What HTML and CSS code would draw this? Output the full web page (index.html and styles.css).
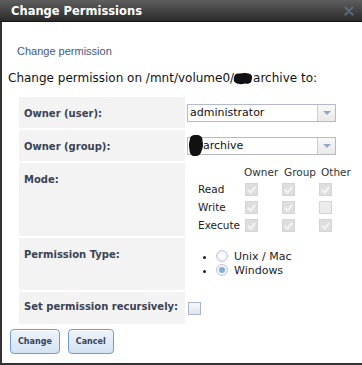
FILE: index.html
```html
<!DOCTYPE html>
<html lang="en">
<head>
    <meta charset="UTF-8">
    <title>Change Permissions</title>
    <link rel="stylesheet" href="styles.css">
</head>
<body>
    <div class="dialog">
        <div class="titlebar">
            <span class="title">Change Permissions</span>
            <svg class="close" width="10" height="10" viewBox="0 0 10 10">
                <path d="M1.5 1.5 L8.5 8.5 M8.5 1.5 L1.5 8.5" stroke="#5d6d84" stroke-width="2.4" stroke-linecap="round"/>
            </svg>
        </div>
        <div class="content">
            <p class="subtitle">Change permission</p>
            <p class="path">Change permission on /mnt/volume0/<svg class="blot" width="20" height="13" viewBox="0 0 20 13"><path d="M1 6 C1 2 4 1 7 1.5 C10 0.5 14 1 17 2 C19.5 3 19.5 6 18.5 8 C19 10.5 16 12.5 12 11.5 C9 12.5 5 12.5 3 11 C0.5 10 0.5 8 1 6 Z" fill="#111"/></svg>archive to:</p>

            <table class="form">
                <colgroup>
                    <col class="label-col">
                    <col>
                </colgroup>
                <tr>
                    <th>Owner (user):</th>
                    <td>
                        <div class="select"><span class="val">administrator</span><span class="arrow"></span></div>
                    </td>
                </tr>
                <tr>
                    <th>Owner (group):</th>
                    <td>
                        <div class="select"><span class="val"><svg class="blot tall" width="16" height="23" viewBox="0 0 16 23"><path d="M2 5 C2 2 5 0.5 8 1 C12 0.5 15 3 14.5 7 C15.5 10 15 14 13.5 17 C13 20.5 10 22.5 7 22 C4 22.5 1.5 20 1.5 16 C0.5 12 1 8 2 5 Z" fill="#111"/></svg>archive</span><span class="arrow"></span></div>
                    </td>
                </tr>
                <tr>
                    <th>Mode:</th>
                    <td class="mode">
                        <div class="mode-grid">
                            <span></span><span class="head">Owner</span><span class="head">Group</span><span class="head">Other</span>
                            <span class="perm">Read</span><span class="cb on"></span><span class="cb on"></span><span class="cb on"></span>
                            <span class="perm">Write</span><span class="cb on"></span><span class="cb on"></span><span class="cb"></span>
                            <span class="perm">Execute</span><span class="cb on"></span><span class="cb on"></span><span class="cb on"></span>
                        </div>
                    </td>
                </tr>
                <tr>
                    <th>Permission Type:</th>
                    <td>
                        <ul class="types">
                            <li><span class="radio"></span>Unix / Mac</li>
                            <li><span class="radio checked"></span>Windows</li>
                        </ul>
                    </td>
                </tr>
                <tr>
                    <th class="mid">Set permission recursively:</th>
                    <td>
                        <span class="check"></span>
                    </td>
                </tr>
            </table>

            <div class="buttons">
                <button type="button">Change</button>
                <button type="button">Cancel</button>
            </div>
        </div>
    </div>
</body>
</html>
```

FILE: styles.css
```css
body {
    margin: 0;
    background: #fff;
    font-family: "DejaVu Sans", Verdana, sans-serif;
}
.dialog {
    width: 362px;
    height: 365px;
    display: flex;
    flex-direction: column;
}
.titlebar {
    height: 22px;
    flex: none;
    display: flex;
    align-items: center;
    justify-content: space-between;
    padding: 0 8px 0 11px;
    background: linear-gradient(#5e5e5e, #2a2a2a);
    border-bottom: 1px solid #151515;
    box-sizing: border-box;
}
.title {
    color: #fff;
    font-weight: bold;
    font-size: 11.5px;
    line-height: 14px;
    margin-top: 1px;
}
.close {
    opacity: 0.9;
}
.content {
    flex: 1;
    border-left: 2px solid #333;
    border-bottom: 2px solid #333;
}
.subtitle {
    margin: 23px 0 0 15px;
    font-family: "Liberation Sans", Arial, sans-serif;
    font-size: 11px;
    line-height: 13px;
    color: #45587a;
}
.path {
    margin: 13px 0 0 6px;
    font-size: 12px;
    line-height: 14px;
    color: #111;
}
.blot {
    vertical-align: -3px;
    margin-left: -1px;
}
.form {
    margin: 10px 0 0 15px;
    border-spacing: 2px;
    width: 330px;
    table-layout: fixed;
}
.label-col {
    width: 166px;
}
.form th {
    background: #f3f3f3;
    text-align: left;
    vertical-align: top;
    padding: 9px 5px 0 5px;
    font-size: 10px;
    line-height: 16px;
    color: #3a4252;
    white-space: nowrap;
}
.form th.mid {
    padding-top: 7px;
}
.form td {
    padding: 7px 0 6px 0;
    vertical-align: top;
}
.select {
    width: 149px;
    height: 18px;
    box-sizing: border-box;
    border: 1px solid #b4bac8;
    display: flex;
    background: #fff;
}
.select .val {
    flex: 1;
    padding-left: 2px;
    font-size: 11px;
    line-height: 16px;
    color: #111;
    white-space: nowrap;
}
.blot.tall {
    vertical-align: middle;
    margin: -5px -1px -4px -2px;
}
.arrow {
    width: 17px;
    border-left: 1px solid #c9cdd6;
    background: linear-gradient(#f8f8f8, #e9e9e9);
    display: flex;
    align-items: center;
    justify-content: center;
}
.arrow::after {
    content: "";
    border-left: 4px solid transparent;
    border-right: 4px solid transparent;
    border-top: 4px solid #93a7cc;
}
.form td.mode {
    padding: 1px 0 2px 0;
}
.mode-grid {
    display: grid;
    grid-template-columns: 47px 37px 37px 37px;
    grid-template-rows: 16px 18px 18px 18px;
    margin-left: 11px;
    align-items: center;
    font-size: 10.5px;
    color: #222;
}
.mode-grid .head {
    margin-left: -1px;
    color: #333;
}
.mode-grid .head + .head {
    margin-left: 2px;
}
.cb {
    width: 13px;
    height: 13px;
    box-sizing: border-box;
    border: 1px solid #d4d4d4;
    background: #ebebeb;
    position: relative;
}
.cb.on {
    background: #dedede;
}
.cb.on::after {
    content: "";
    position: absolute;
    left: 3px;
    top: 1px;
    width: 3px;
    height: 6px;
    border-right: 2px solid #f4f4f4;
    border-bottom: 2px solid #f4f4f4;
    transform: rotate(40deg);
}
.types {
    margin: 5px 0 6px 0;
    padding-left: 29px;
    list-style: disc;
    font-size: 11px;
    line-height: 14px;
    color: #222;
}
.radio {
    display: inline-block;
    width: 12px;
    height: 12px;
    box-sizing: border-box;
    border-radius: 50%;
    border: 1px solid #bfcad8;
    background: radial-gradient(#ffffff, #e4eaf1);
    vertical-align: -2px;
    margin-right: 6px;
    position: relative;
}
.radio.checked::after {
    content: "";
    position: absolute;
    left: 2px;
    top: 2px;
    width: 6px;
    height: 6px;
    border-radius: 50%;
    background: #86acd6;
}
.check {
    display: block;
    width: 13px;
    height: 13px;
    box-sizing: border-box;
    margin: 3px 0 3px 1px;
    border: 1px solid #a9b6c9;
    background: linear-gradient(#f6f8fb, #dfe6ef);
}
.buttons {
    display: flex;
    gap: 8px;
    margin: 3px 0 0 8px;
}
.buttons button {
    height: 25px;
    padding: 0 7px;
    border: 1px solid #6f9dcc;
    border-radius: 4px;
    background: linear-gradient(#eef4fa, #d3e3f2);
    box-shadow: inset 0 1px 0 #fff;
    font-family: "DejaVu Sans", Verdana, sans-serif;
    font-weight: bold;
    font-size: 8px;
    color: #33435c;
}
```
